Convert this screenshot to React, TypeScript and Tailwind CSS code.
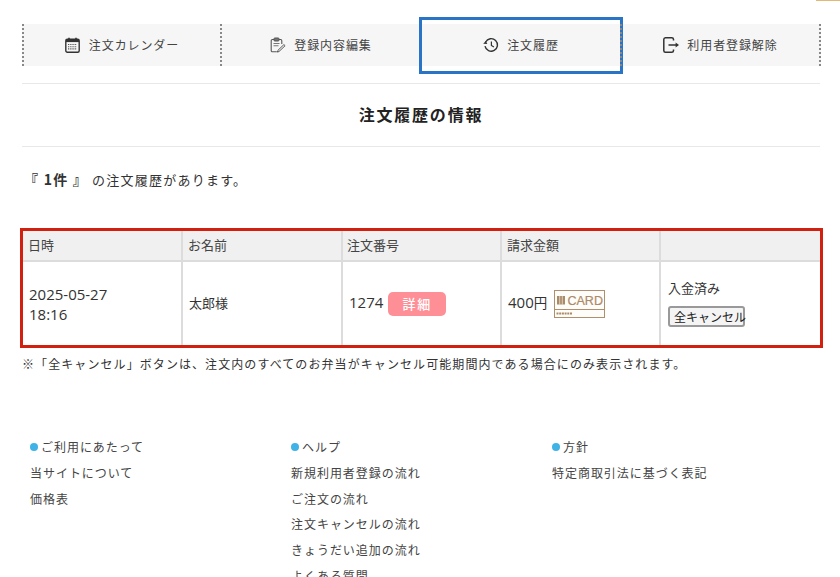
import type { ReactNode } from "react";

function Svg({ children }: { children: ReactNode }) {
  return (
    <svg width="16" height="16" viewBox="0 0 16 16" fill="none" stroke="#333" className="shrink-0">
      {children}
    </svg>
  );
}

const CalendarIcon = () => (
  <Svg>
    <rect x="0.8" y="2.2" width="13.4" height="13" rx="1.5" strokeWidth="1.4" />
    <rect x="1" y="2.5" width="13" height="2.6" fill="#333" stroke="none" />
    <path d="M4 0.8v2.4M11 0.8v2.4" strokeWidth="1.6" />
    <path d="M3 7.5h9M3 9.7h9M3 11.9h9" stroke="#555" strokeWidth="1.1" strokeDasharray="1.3 0.9" />
  </Svg>
);

const ClipboardIcon = () => (
  <Svg>
    <path d="M4 2.5H2.4A1.2 1.2 0 0 0 1.2 3.7v9.8a1.2 1.2 0 0 0 1.2 1.2h4.4M9 2.5h1.6a1.2 1.2 0 0 1 1.2 1.2V7" stroke="#555" strokeWidth="1.1" />
    <rect x="4" y="1" width="5" height="3" rx="0.8" fill="#777" stroke="#555" />
    <path d="M3.5 6.5h6M3.5 8.7h5" stroke="#777" strokeWidth="1.1" />
    <path d="M9 14.5l-1.6 0.6 0.5-1.7 6-5.8 1.2 1.1z" stroke="#555" strokeWidth="1" fill="#fff" />
  </Svg>
);

const HistoryIcon = () => (
  <Svg>
    <path d="M2.6 5A6.3 6.3 0 1 1 2 9.2" strokeWidth="1.4" />
    <path d="M0.2 6.8l2.6-2.9 1.5 3z" fill="#333" stroke="none" />
    <path d="M8.4 4.6v3.8l2.5 1.6" strokeWidth="1.2" />
  </Svg>
);

const LeaveIcon = () => (
  <Svg>
    <path d="M10.5 3.6V2.4A1.7 1.7 0 0 0 8.8 0.8H2.4A1.7 1.7 0 0 0 0.8 2.4v11.2a1.7 1.7 0 0 0 1.6 1.6h6.4a1.7 1.7 0 0 0 1.7-1.6v-1.2" strokeWidth="1.5" />
    <path d="M5.5 8h8" strokeWidth="1.5" />
    <path d="M12.6 5.4L16 8l-3.4 2.6z" fill="#333" stroke="none" />
  </Svg>
);

const tabs = [
  { label: "注文カレンダー", icon: <CalendarIcon /> },
  { label: "登録内容編集", icon: <ClipboardIcon /> },
  { label: "注文履歴", icon: <HistoryIcon />, active: true },
  { label: "利用者登録解除", icon: <LeaveIcon /> },
];

const footer = [
  { title: "ご利用にあたって", links: ["当サイトについて", "価格表"] },
  { title: "ヘルプ", links: ["新規利用者登録の流れ", "ご注文の流れ", "注文キャンセルの流れ", "きょうだい追加の流れ", "よくある質問"] },
  { title: "方針", links: ["特定商取引法に基づく表記"] },
];

function CardMark() {
  return (
    <svg width="51" height="28" viewBox="0 0 51 28" className="ml-[7px] shrink-0">
      <rect x="0.5" y="0.5" width="50" height="27" fill="#fffdf9" stroke="#b08f6c" />
      <line x1="1" y1="19.5" x2="50" y2="19.5" stroke="#b08f6c" />
      <rect x="3" y="6" width="8" height="8.5" fill="#ab8a67" />
      <path d="M5.7 6v8.5M8.3 6v8.5" stroke="#fffdf9" strokeWidth="0.6" />
      <path d="M2.5 23.5h16" stroke="#ab8a67" strokeWidth="2" strokeDasharray="2 0.7" />
      <text x="13.5" y="14.7" fontSize="12.5" fill="#ab8a67" fontFamily="Liberation Sans" stroke="#ab8a67" strokeWidth="0.2">CARD</text>
    </svg>
  );
}

export default function App() {
  return (
    <div className="relative h-[577px] w-[840px] overflow-hidden bg-white font-['Noto_Sans_CJK_JP',sans-serif] text-[#333]">
      <div className="absolute right-0 top-0 h-px w-6 bg-[#e0b878]" />

      <div className="w-[820px] pl-[22px] pt-6">
        {/* Tabs */}
        <div className="grid h-[42px] w-[799px] grid-cols-[198px_200px_200px_1fr] border-r-2 border-dotted border-r-[#888] bg-[#f6f6f6]">
          {tabs.map((tab) => (
            <div
              key={tab.label}
              className="relative flex items-center justify-center gap-2 border-l-2 border-dotted border-l-[#888] text-[12px] tracking-[0.075em] text-[#444]"
            >
              {tab.icon}
              <span>{tab.label}</span>
              {tab.active && (
                <div className="absolute -bottom-2 -left-[3px] -right-[3px] -top-[7px] border-[3px] border-[#2a74c6]" />
              )}
            </div>
          ))}
        </div>

        <div className="mt-[17px] w-[798px] border-t border-[#e8e8e8]" />
        <h1 className="pb-5 pt-[18px] text-center text-[16px] font-bold leading-6 tracking-[0.11em] text-[#222]">注文履歴の情報</h1>
        <div className="w-[798px] border-t border-[#e8e8e8]" />

        <p className="mt-[22px] pl-[2px] text-[13px] leading-5 tracking-[0.095em]">
          <span className="mr-1 whitespace-pre text-[14px] font-bold">『 1件 』</span>の注文履歴があります。
        </p>
      </div>

      {/* Order table */}
      <div className="ml-5 mt-[38px] w-[803px] border-[3px] border-[#d22010]">
        <div className="grid h-[31px] grid-cols-[158px_160px_159px_159px_1fr] border-b-2 border-[#dcdcdc] bg-[#f0f0f0] text-[13px] leading-[27px] text-[#444]">
          <div className="pl-[5px]">日時</div>
          <div className="border-l-2 border-[#dcdcdc] pl-[5px]">お名前</div>
          <div className="border-l-2 border-[#dcdcdc] pl-[4px]">注文番号</div>
          <div className="border-l-2 border-[#dcdcdc] pl-[5px]">請求金額</div>
          <div className="border-l-2 border-[#dcdcdc]" />
        </div>
        <div className="grid h-[83px] grid-cols-[158px_160px_159px_159px_1fr] text-[#333]">
          <div className="flex flex-col justify-center pl-[6px] font-['Open_Sans',sans-serif] text-[15px] leading-5">
            <span>2025-05-27</span>
            <span>18:16</span>
          </div>
          <div className="flex items-center border-l-2 border-[#dcdcdc] pb-[2px] pl-[6px] text-[13px]">太郎様</div>
          <div className="flex items-center border-l-2 border-[#dcdcdc] pl-[6px] font-['Open_Sans',sans-serif] text-[15px]">
            <span className="pb-[3px]">1274</span>
            <span className="ml-[5px] flex h-6 w-[58px] items-center justify-center rounded-[5px] bg-[#ff8f97] font-['Noto_Sans_CJK_JP',sans-serif] text-[13px] font-medium tracking-[0.14em] text-white">詳細</span>
          </div>
          <div className="flex items-center border-l-2 border-[#dcdcdc] pl-[6px] font-['Open_Sans',sans-serif] text-[15px]">
            <span className="pb-[3px]">400<span className="font-['Noto_Sans_CJK_JP',sans-serif] text-[13.5px]">円</span></span>
            <CardMark />
          </div>
          <div className="flex flex-col justify-center border-l-2 border-[#dcdcdc] pb-[2px] pl-[7px] text-[13px]">
            <span className="leading-5">入金済み</span>
            <button className="mt-[8px] h-[21px] w-[77px] whitespace-nowrap rounded-[3px] border-2 border-[#999] bg-[#f4f4f4] pl-[4px] text-left text-[12px] leading-4 text-[#222]">全キャンセル</button>
          </div>
        </div>
      </div>

      <p className="mt-[7px] pl-[22px] text-[12px] leading-[18px] tracking-[0.09em] text-[#333]">
        ※「全キャンセル」ボタンは、注文内のすべてのお弁当がキャンセル可能期間内である場合にのみ表示されます。
      </p>

      {/* Footer links */}
      <div className="mt-[61px] grid grid-cols-[261px_261px_1fr] pl-[30px] text-[12px] leading-[25.8px] tracking-[0.08em] text-[#444]">
        {footer.map((col) => (
          <div key={col.title}>
            <div className="flex items-center">
              <span className="mr-[3px] h-2 w-2 rounded-full bg-[#3fb2e6]" />
              {col.title}
            </div>
            {col.links.map((link) => (
              <div key={link}>{link}</div>
            ))}
          </div>
        ))}
      </div>
    </div>
  );
}
